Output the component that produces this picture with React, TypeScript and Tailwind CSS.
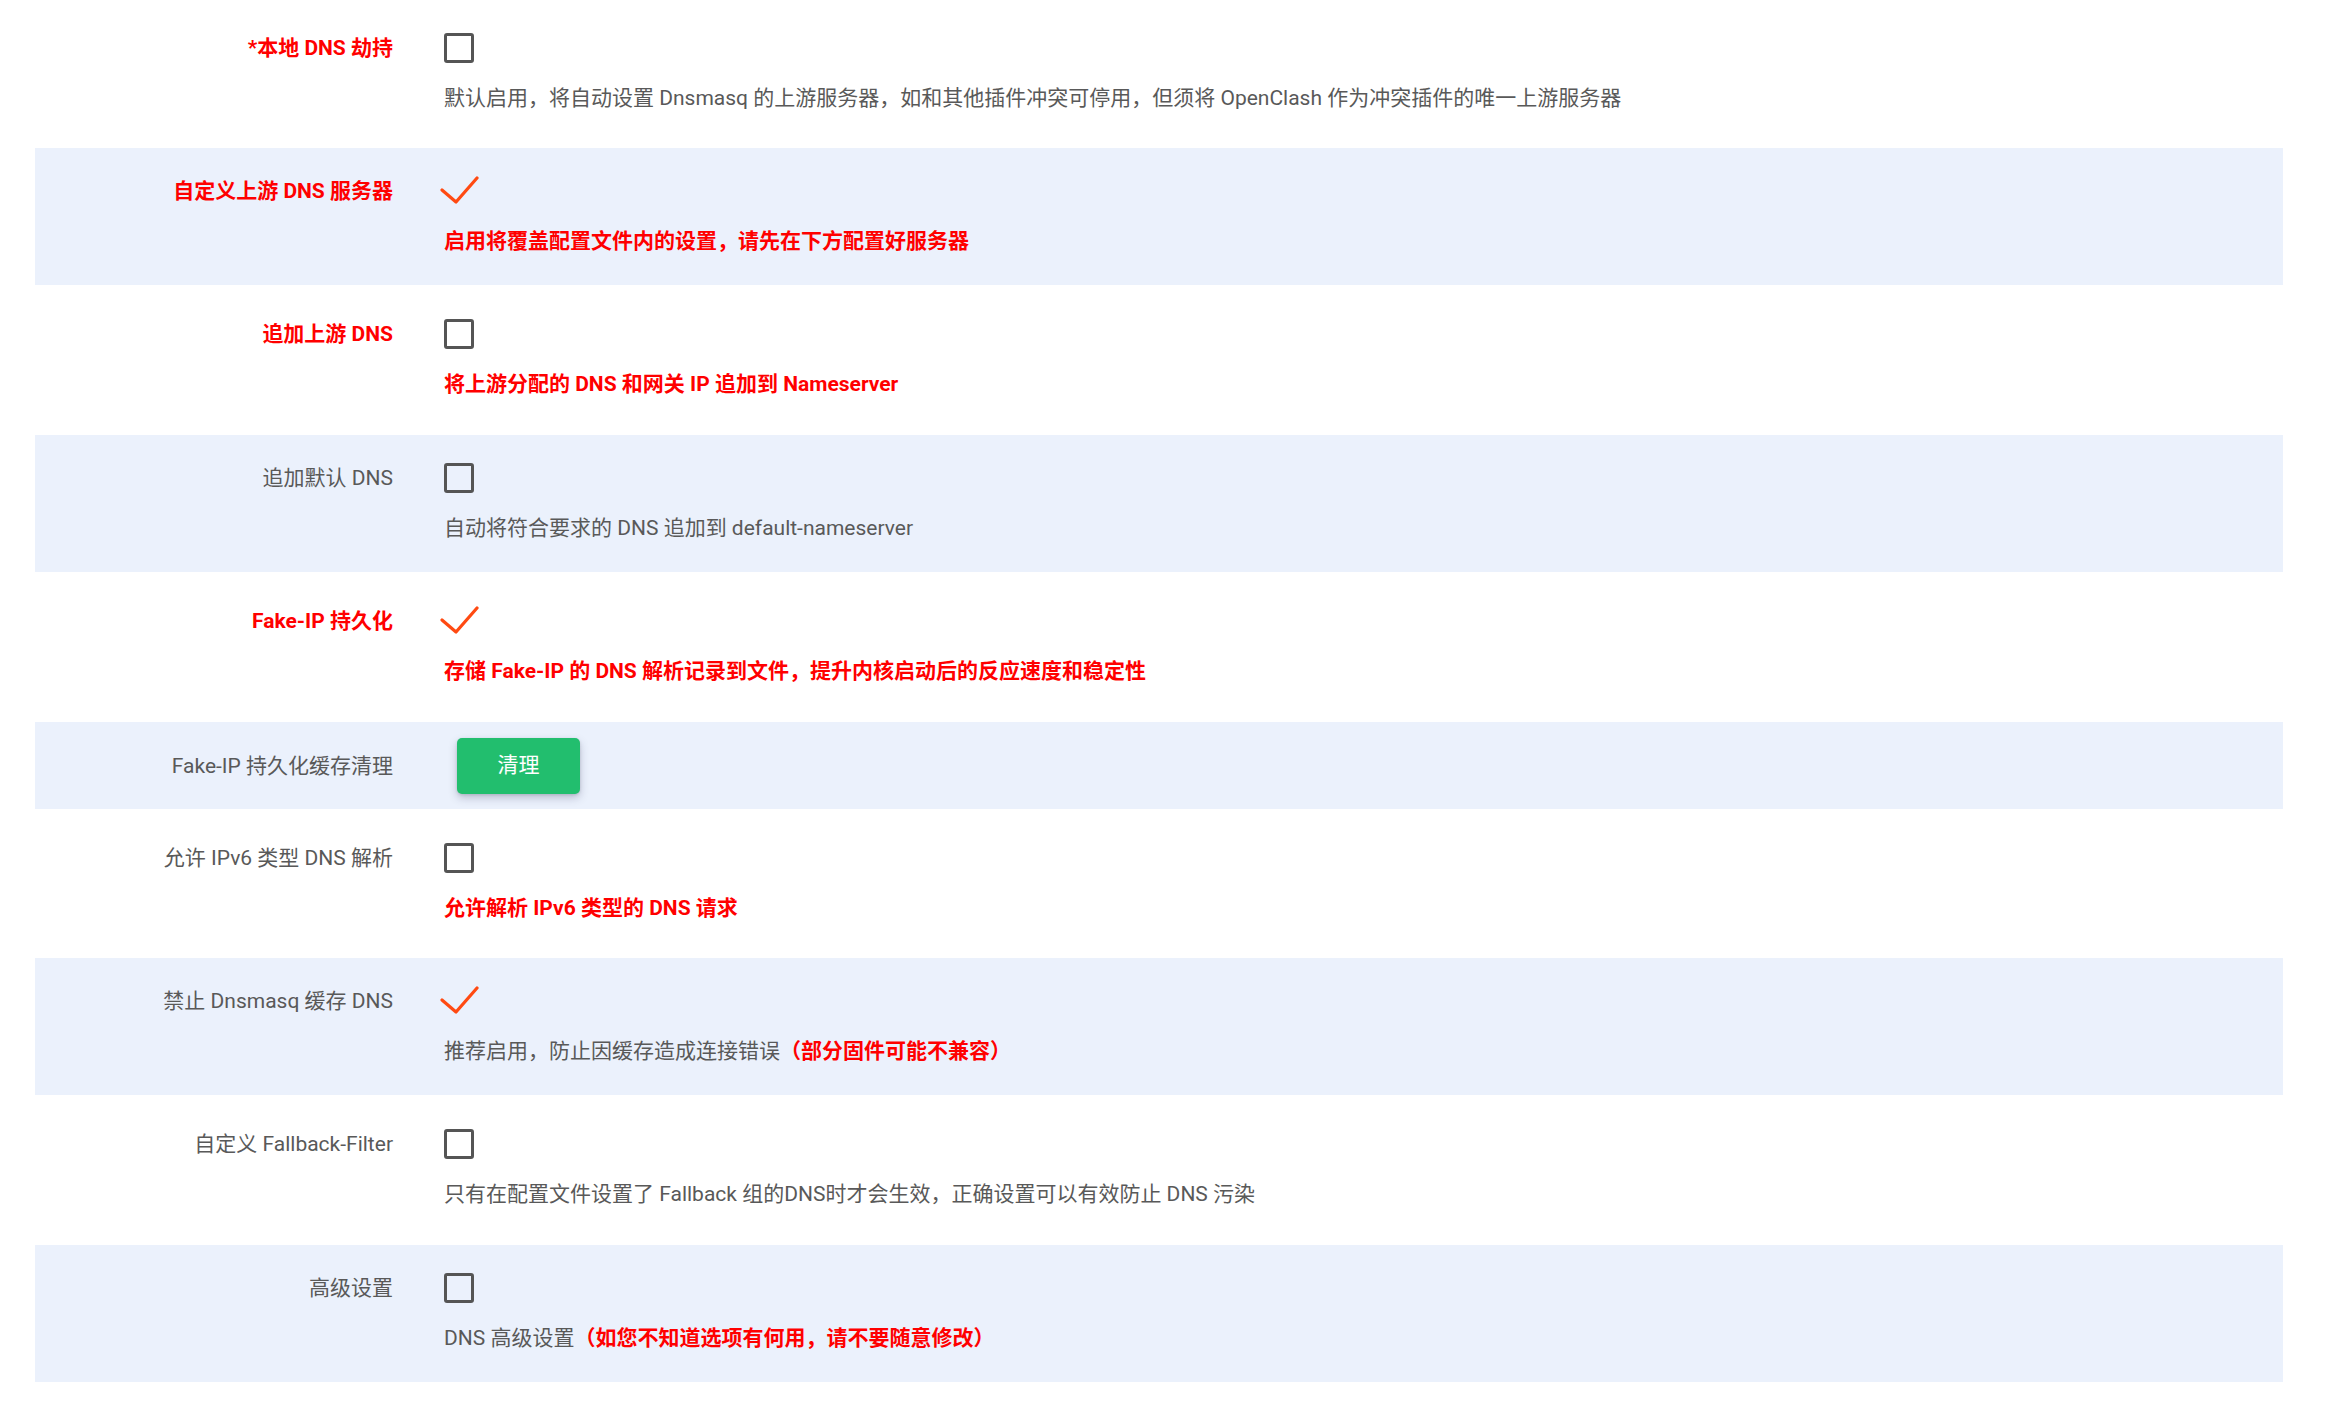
import type { ReactNode } from 'react';

type Row = {
  label: string;
  labelRed?: boolean;
  kind: 'box' | 'check' | 'button';
  desc?: ReactNode;
};

const red = (t: string) => <span className="font-bold text-[#ff0000]">{t}</span>;

const rows: Row[] = [
  {
    label: '*本地 DNS 劫持',
    labelRed: true,
    kind: 'box',
    desc: '默认启用，将自动设置 Dnsmasq 的上游服务器，如和其他插件冲突可停用，但须将 OpenClash 作为冲突插件的唯一上游服务器',
  },
  {
    label: '自定义上游 DNS 服务器',
    labelRed: true,
    kind: 'check',
    desc: red('启用将覆盖配置文件内的设置，请先在下方配置好服务器'),
  },
  {
    label: '追加上游 DNS',
    labelRed: true,
    kind: 'box',
    desc: red('将上游分配的 DNS 和网关 IP 追加到 Nameserver'),
  },
  {
    label: '追加默认 DNS',
    kind: 'box',
    desc: '自动将符合要求的 DNS 追加到 default-nameserver',
  },
  {
    label: 'Fake-IP 持久化',
    labelRed: true,
    kind: 'check',
    desc: red('存储 Fake-IP 的 DNS 解析记录到文件，提升内核启动后的反应速度和稳定性'),
  },
  { label: 'Fake-IP 持久化缓存清理', kind: 'button' },
  {
    label: '允许 IPv6 类型 DNS 解析',
    kind: 'box',
    desc: red('允许解析 IPv6 类型的 DNS 请求'),
  },
  {
    label: '禁止 Dnsmasq 缓存 DNS',
    kind: 'check',
    desc: (
      <>
        推荐启用，防止因缓存造成连接错误{red('（部分固件可能不兼容）')}
      </>
    ),
  },
  {
    label: '自定义 Fallback-Filter',
    kind: 'box',
    desc: '只有在配置文件设置了 Fallback 组的DNS时才会生效，正确设置可以有效防止 DNS 污染',
  },
  {
    label: '高级设置',
    kind: 'box',
    desc: (
      <>
        DNS 高级设置{red('（如您不知道选项有何用，请不要随意修改）')}
      </>
    ),
  },
];

function CheckMark() {
  return (
    <svg width="40" height="30" viewBox="0 0 40 30" className="-ml-[4px] block">
      <path
        d="M2 14 L16 26 L37 2"
        fill="none"
        stroke="#ff4a12"
        strokeWidth="3.2"
        strokeLinecap="round"
        strokeLinejoin="round"
      />
    </svg>
  );
}

function SettingRow({ row, striped }: { row: Row; striped: boolean }) {
  const isButton = row.kind === 'button';
  // striped rows sit a little tighter than the white ones
  const pad = isButton
    ? 'pt-[16px] pb-[15px]'
    : striped
      ? 'pt-[28px] pb-[29.25px]'
      : 'pt-[34px] pb-[35.5px]';

  return (
    <div className={`flex ${pad} ${striped ? 'bg-[#ebf1fc]' : ''}`}>
      <div
        className={`w-[358px] shrink-0 text-right text-[21px] ${
          isButton ? 'h-[56px] leading-[56px]' : 'h-[30px] leading-[30px]'
        } ${row.labelRed ? 'font-bold text-[#ff0000]' : 'text-[#595959]'}`}
      >
        {row.label}
      </div>
      <div className="ml-[51px] flex flex-col">
        {row.kind === 'box' && (
          <div className="h-[30px] w-[30px] rounded-[3px] border-[3px] border-[#555555]" />
        )}
        {row.kind === 'check' && <CheckMark />}
        {isButton && (
          <button className="ml-[13px] h-[56px] w-[123px] rounded-[5px] bg-[#22be6e] text-[21px] text-white shadow-[0_4px_8px_rgba(50,50,93,0.25),0_1px_3px_rgba(0,0,0,0.12)]">
            清理
          </button>
        )}
        {row.desc && (
          <div className="mt-[20px] h-[30px] text-[21px] leading-[30px] whitespace-nowrap text-[#595959]">
            {row.desc}
          </div>
        )}
      </div>
    </div>
  );
}

export default function App() {
  return (
    <div
      className="min-h-screen bg-white"
      style={{ fontFamily: 'Roboto, "Noto Sans CJK SC", sans-serif' }}
    >
      <div className="-mt-[1.5px] pl-[35px] pr-[45px]">
        {rows.map((row, i) => (
          <SettingRow key={row.label} row={row} striped={i % 2 === 1} />
        ))}
      </div>
    </div>
  );
}
